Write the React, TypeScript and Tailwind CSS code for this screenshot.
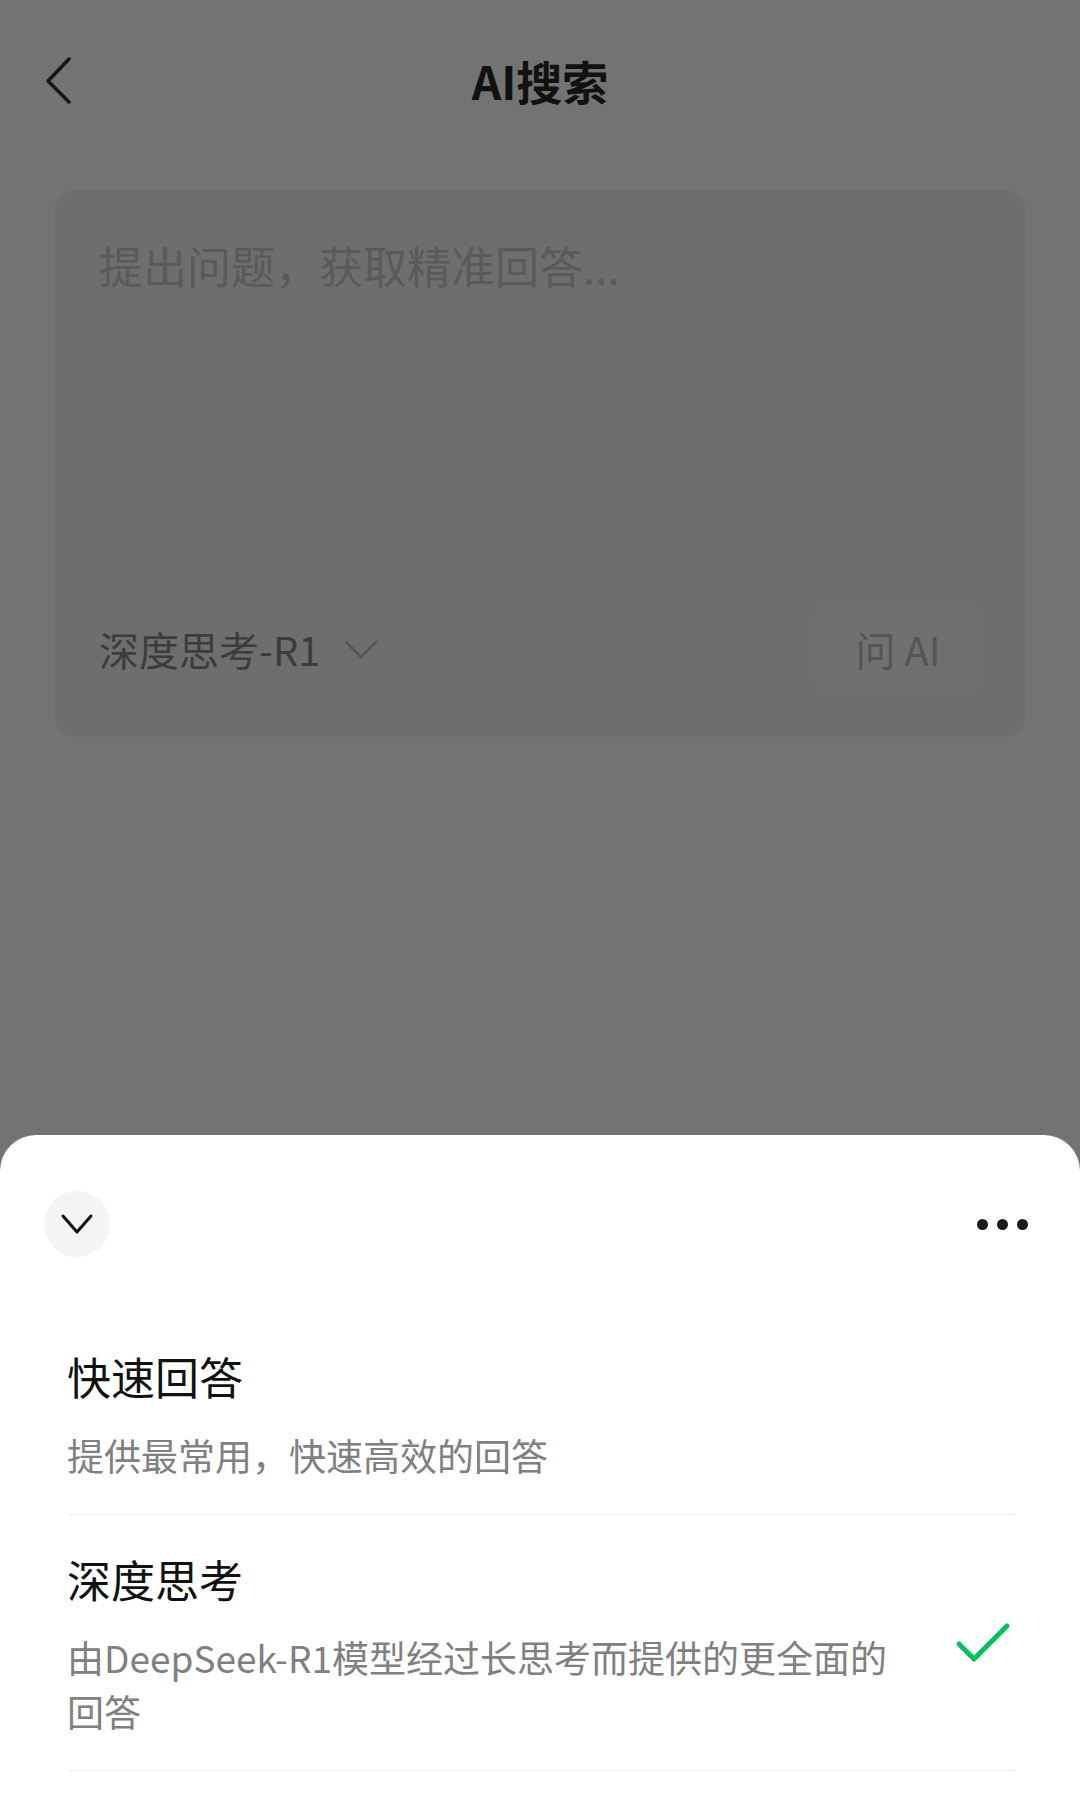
import React from "react";

export default function App() {
  return (
    <div className="relative w-[1080px] h-[1810px] overflow-hidden bg-[#737373] font-['Noto_Sans_CJK_SC','Noto_Sans',sans-serif]">
      {/* Header */}
      <div className="relative h-[164px] flex items-center justify-center">
        <svg className="absolute left-[40px] top-[50px]" width="40" height="62" viewBox="0 0 40 62">
          <polyline points="29,9 8,31 29,52" fill="none" stroke="#161616" strokeWidth="3.5" strokeLinecap="round" strokeLinejoin="round" />
        </svg>
        <div className="mb-[4px] text-[46px] leading-[60px] font-semibold text-[#111111]">AI搜索</div>
      </div>

      {/* Input card */}
      <div className="mt-[26px] mx-[55px] h-[547px] rounded-[20px] bg-[#6e6e6e] pt-[45px] pl-[44px] pr-[44px] pb-[45px] flex flex-col justify-between">
        <div className="text-[44px] leading-[60px] text-[#5a5a5a]">提出问题，获取精准回答...</div>
        <div className="flex items-center justify-between">
          <div className="flex items-center">
            <span className="text-[40px] leading-[56px] text-[#3c3c3c]">深度思考-R1</span>
            <svg className="ml-[24px]" width="34" height="20" viewBox="0 0 34 20">
              <polyline points="2,3 17,18 32,3" fill="none" stroke="#555555" strokeWidth="2.5" strokeLinecap="round" strokeLinejoin="round" />
            </svg>
          </div>
          <div className="w-[166px] h-[87px] rounded-[12px] bg-[#707070] flex items-center justify-center">
            <span className="text-[40px] leading-[56px] text-[#545454]">问 AI</span>
          </div>
        </div>
      </div>

      {/* Bottom sheet */}
      <div className="absolute left-0 right-0 bottom-0 top-[1135px] bg-white rounded-t-[36px]">
        <div className="pt-[56px] pl-[44px] pr-[52px] flex items-center justify-between">
          <div className="w-[66px] h-[66px] rounded-full bg-[#f5f5f5] flex items-center justify-center">
            <svg width="34" height="22" viewBox="0 0 34 22">
              <polyline points="3,3 17,19 31,3" fill="none" stroke="#111111" strokeWidth="3" strokeLinecap="round" strokeLinejoin="round" />
            </svg>
          </div>
          <div className="flex items-center gap-[9px]">
            <div className="w-[11px] h-[11px] rounded-full bg-[#1a1a1a]" />
            <div className="w-[11px] h-[11px] rounded-full bg-[#1a1a1a]" />
            <div className="w-[11px] h-[11px] rounded-full bg-[#1a1a1a]" />
          </div>
        </div>

        <div className="mt-[54px] pl-[67px] pr-[66px]">
          <div className="pt-[35px] pb-[32px] border-b border-[#ededed]">
            <div className="text-[44px] leading-[60px] text-[#111111]">快速回答</div>
            <div className="mt-[22px] text-[37px] leading-[54px] text-[#808080]">提供最常用，快速高效的回答</div>
          </div>
          <div className="pt-[34px] pb-[32px] border-b border-[#ededed] flex items-center justify-between">
            <div className="w-[855px]">
              <div className="text-[44px] leading-[60px] text-[#111111]">深度思考</div>
              <div className="mt-[21px] text-[37px] leading-[54px] text-[#808080]">由DeepSeek-R1模型经过长思考而提供的更全面的回答</div>
            </div>
            <svg width="60" height="44" viewBox="0 0 60 44">
              <polyline points="5,22 20,37 53,4" fill="none" stroke="#07c160" strokeWidth="5" strokeLinecap="round" strokeLinejoin="round" />
            </svg>
          </div>
        </div>
      </div>
    </div>
  );
}
